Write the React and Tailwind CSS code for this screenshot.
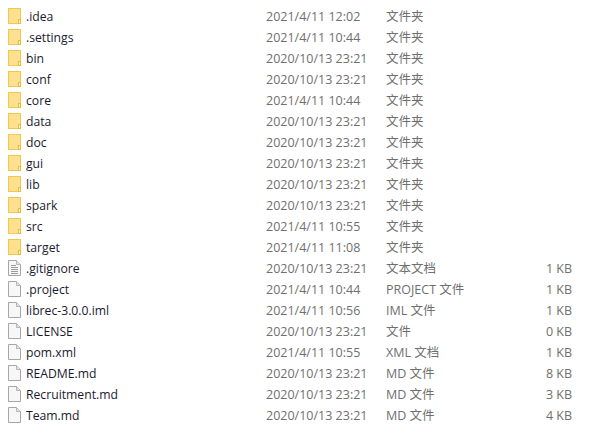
const FOLDER = "文件夹";

const rows = [
  { name: ".idea", date: "2021/4/11 12:02", type: FOLDER, icon: "folder" },
  { name: ".settings", date: "2021/4/11 10:44", type: FOLDER, icon: "folder" },
  { name: "bin", date: "2020/10/13 23:21", type: FOLDER, icon: "folder" },
  { name: "conf", date: "2020/10/13 23:21", type: FOLDER, icon: "folder" },
  { name: "core", date: "2021/4/11 10:44", type: FOLDER, icon: "folder" },
  { name: "data", date: "2020/10/13 23:21", type: FOLDER, icon: "folder" },
  { name: "doc", date: "2020/10/13 23:21", type: FOLDER, icon: "folder" },
  { name: "gui", date: "2020/10/13 23:21", type: FOLDER, icon: "folder" },
  { name: "lib", date: "2020/10/13 23:21", type: FOLDER, icon: "folder" },
  { name: "spark", date: "2020/10/13 23:21", type: FOLDER, icon: "folder" },
  { name: "src", date: "2021/4/11 10:55", type: FOLDER, icon: "folder" },
  { name: "target", date: "2021/4/11 11:08", type: FOLDER, icon: "folder" },
  { name: ".gitignore", date: "2020/10/13 23:21", type: "文本文档", size: "1 KB", icon: "text" },
  { name: ".project", date: "2021/4/11 10:44", type: "PROJECT 文件", size: "1 KB", icon: "file" },
  { name: "librec-3.0.0.iml", date: "2021/4/11 10:56", type: "IML 文件", size: "1 KB", icon: "file" },
  { name: "LICENSE", date: "2020/10/13 23:21", type: "文件", size: "0 KB", icon: "file" },
  { name: "pom.xml", date: "2021/4/11 10:55", type: "XML 文档", size: "1 KB", icon: "file" },
  { name: "README.md", date: "2020/10/13 23:21", type: "MD 文件", size: "8 KB", icon: "file" },
  { name: "Recruitment.md", date: "2020/10/13 23:21", type: "MD 文件", size: "3 KB", icon: "file" },
  { name: "Team.md", date: "2020/10/13 23:21", type: "MD 文件", size: "4 KB", icon: "file" },
];

function FolderIcon() {
  return (
    <svg width="13" height="16" viewBox="0 0 13 16" className="mb-[3px] shrink-0">
      <rect x="0.5" y="0.5" width="12" height="15" fill="#fee08f" stroke="#efc94f" />
      <rect x="10.5" y="11.5" width="2" height="4" fill="#fff3c4" stroke="#e8bd3e" />
    </svg>
  );
}

function FileIcon({ lines }) {
  return (
    <svg width="13" height="16" viewBox="0 0 13 16" className="mb-[3px] shrink-0">
      <path d="M0.5 0.5H8.5L12.5 4.5V15.5H0.5Z" fill="#f7f7f7" stroke="#a6a6a6" />
      <path d="M8.5 0.5V4.5H12.5" fill="#e4e4e4" stroke="#b5b5b5" />
      {lines && (
        <path d="M3 5.5H8M3 7.5H10M3 9.5H10M3 11.5H10M3 13.5H10" stroke="#9a9a9a" />
      )}
    </svg>
  );
}

function Row({ row }) {
  return (
    <div className="flex h-[21px] items-center text-[12.5px]">
      <div className="flex w-[266px] items-center pl-[8px]">
        {row.icon === "folder" ? <FolderIcon /> : <FileIcon lines={row.icon === "text"} />}
        <span className="ml-[5px] text-[12.2px] text-[#1a1a2e]">{row.name}</span>
      </div>
      <div className="w-[120px] text-[#6f6f6f]">{row.date}</div>
      <div className="w-[132px] text-[#6f6f6f]">{row.type}</div>
      <div className="w-[54px] text-right text-[#6f6f6f]">{row.size}</div>
    </div>
  );
}

export default function App() {
  return (
    <div
      className="h-[435px] w-[603px] overflow-hidden bg-white pt-[7px]"
      style={{ fontFamily: '"Open Sans", "Noto Sans CJK SC", sans-serif' }}
    >
      {rows.map((row) => (
        <Row key={row.name} row={row} />
      ))}
    </div>
  );
}
